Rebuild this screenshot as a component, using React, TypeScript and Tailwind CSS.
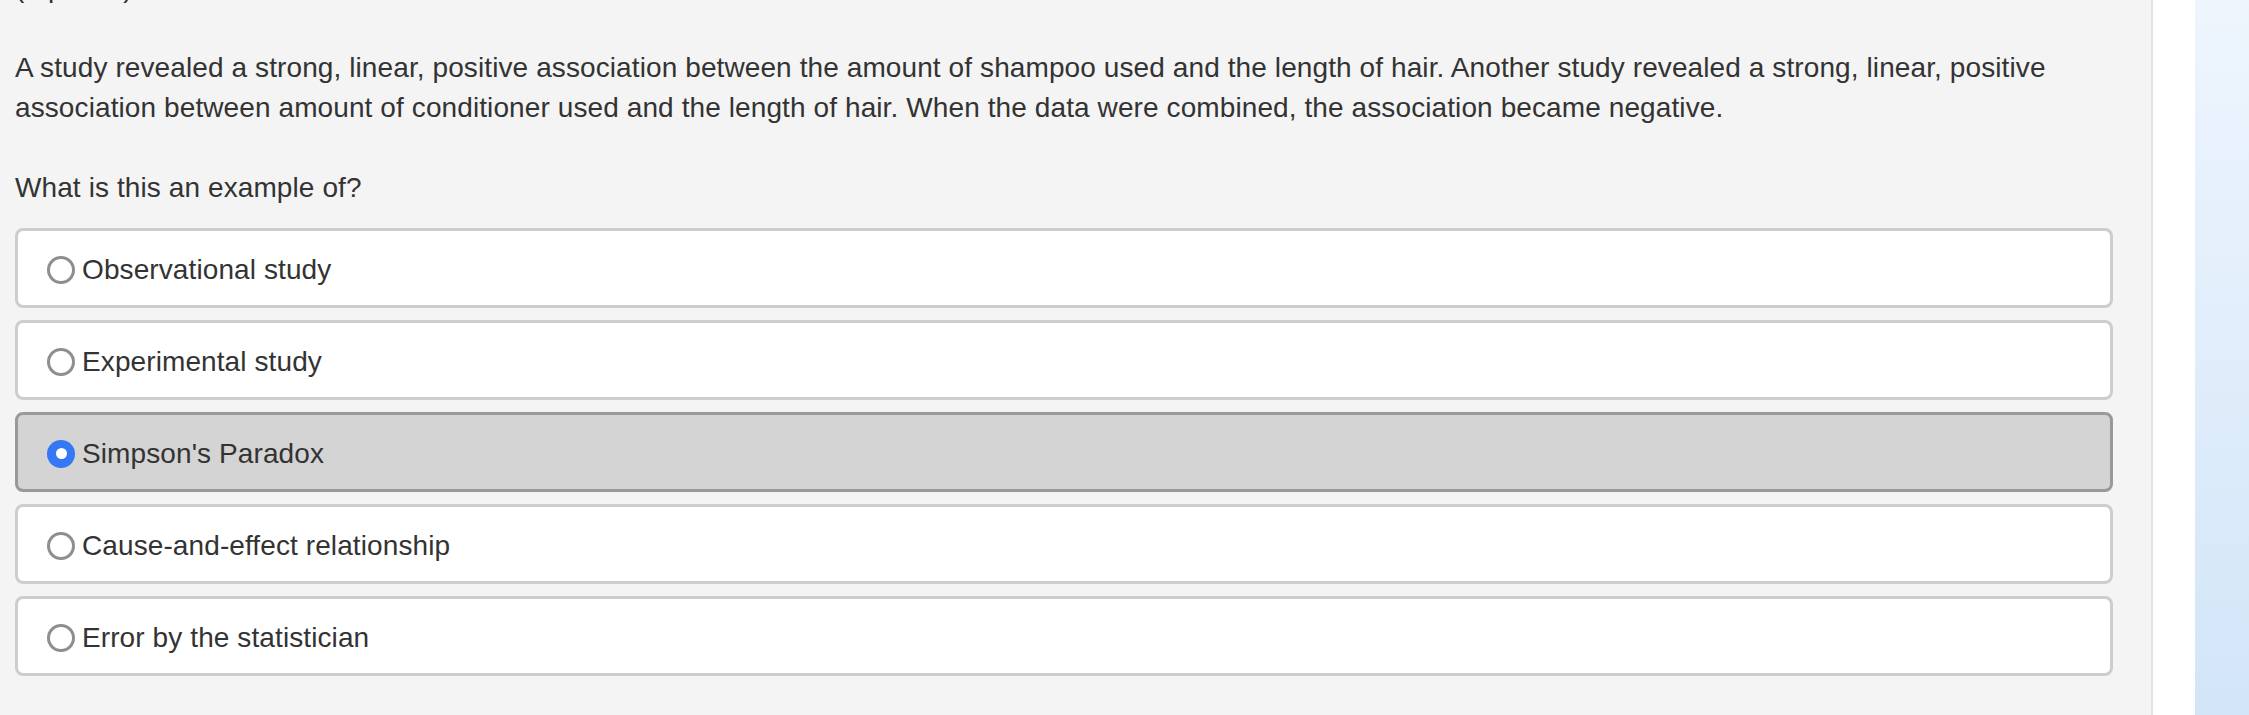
import React from 'react';

const options = [
  'Observational study',
  'Experimental study',
  "Simpson's Paradox",
  'Cause-and-effect relationship',
  'Error by the statistician',
];

function Radio({ checked }: { checked: boolean }) {
  if (checked) {
    return (
      <span className="flex h-[28px] w-[28px] shrink-0 items-center justify-center rounded-full bg-[#3478f6]">
        <span className="h-[11px] w-[11px] rounded-full bg-white" />
      </span>
    );
  }
  return <span className="h-[28px] w-[28px] shrink-0 rounded-full border-[3px] border-[#8e8e8e] bg-white" />;
}

export default function App() {
  const selected = 2;
  return (
    <div
      className="flex h-[715px] w-full overflow-hidden text-[28px] leading-[40px] tracking-[0.1px] text-[#333]"
      style={{ fontFamily: '"Liberation Sans", Arial, Helvetica, sans-serif' }}
    >
      {/* question panel */}
      <div className="w-[2151px] shrink-0 bg-[#f4f4f4] pl-[15px] pr-[38px]">
        <div className="-mt-[32px]">(2 points)</div>

        <p className="mt-[40px]">
          A study revealed a strong, linear, positive association between the amount of shampoo used and the length
          of hair. Another study revealed a strong, linear, positive association between amount of conditioner used
          and the length of hair. When the data were combined, the association became negative.
        </p>

        <p className="mt-[40px]">What is this an example of?</p>

        <div className="mt-[20px] flex flex-col gap-[12px]">
          {options.map((label, i) => {
            const on = i === selected;
            return (
              <div
                key={label}
                className={
                  on
                    ? 'flex h-[80px] items-center gap-[7px] rounded-[8px] border-[3px] border-[#999] bg-[#d4d4d4] pl-[29px] pt-[3px]'
                    : 'flex h-[80px] items-center gap-[7px] rounded-[8px] border-[3px] border-[#cdcdcd] bg-white pl-[29px] pt-[3px]'
                }
              >
                <Radio checked={on} />
                <span>{label}</span>
              </div>
            );
          })}
        </div>
      </div>

      {/* right edge */}
      <div className="w-[2px] shrink-0 bg-[#e3e3e3]" />
      <div className="w-[42px] shrink-0 bg-white" />
      <div className="flex-1 bg-linear-to-b from-[#eef5fd] to-[#d2e5f8]" />
    </div>
  );
}
